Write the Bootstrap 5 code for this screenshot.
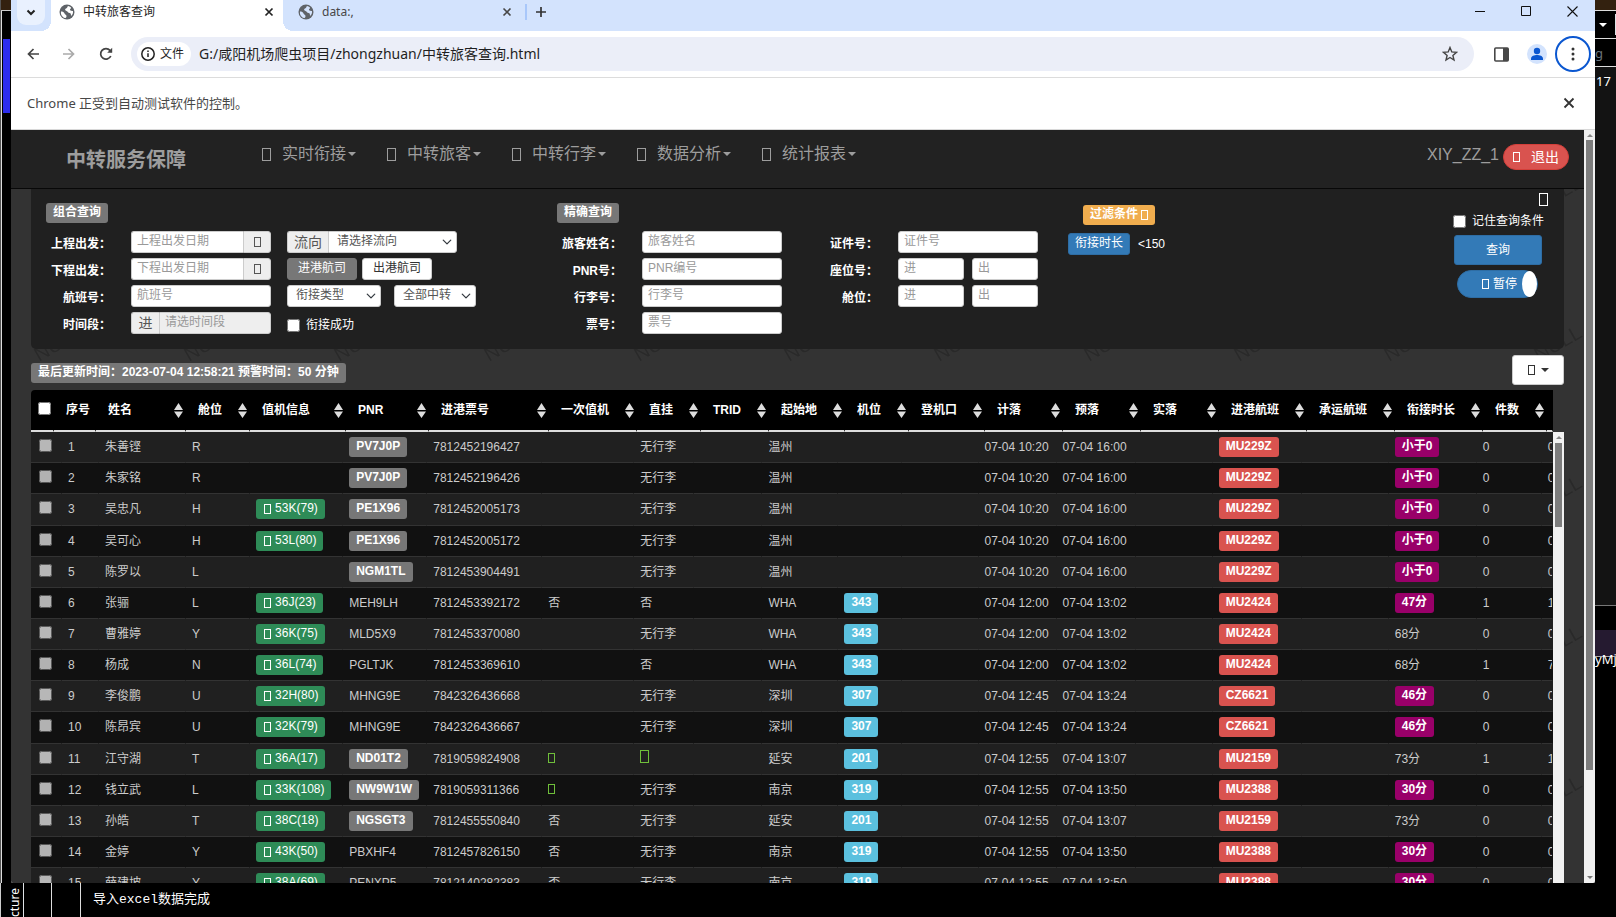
<!DOCTYPE html>
<html lang="zh-CN">
<head>
<meta charset="utf-8">
<meta name="viewport" content="width=device-width, initial-scale=1">
<title>中转旅客查询</title>
<link href="https://cdn.jsdelivr.net/npm/bootstrap@5.3.0/dist/css/bootstrap.min.css" rel="stylesheet">
<style>
:root{--ui:"Noto Sans","Noto Sans CJK SC",sans-serif;--page:"Liberation Sans","Noto Sans CJK SC",sans-serif}
body{height:100vh;background:#000;font-family:var(--page);font-size:12px;line-height:16px;color:#fff;overflow:hidden}
button,input,select{font-family:inherit}
.min-h-0{min-height:0}
/* desktop behind the browser */
.side-l{width:11px;border-left:1px solid #555;box-shadow:inset 1px 0 #ddd;background:#000}
.side-l .brown{height:11px;background:#33210f;border-bottom:1px solid #ccc}
.side-l .blue{height:74px;margin:28px 1px 0 2px;background:#2d2dee}
.side-r{width:21px;background:#000;font:13px/16px var(--ui)}
.side-r .brown{height:11px;background:#33210f;border-bottom:1px solid #ddd}
.side-r .cell{height:28px;border-bottom:1px solid #ddd}
.side-r .dark{height:539px;background:#131313;border-bottom:1px solid #777;padding:6px 0 0 1px}
.side-r .purple{height:27px;margin-top:24px;background:#251a30;border-bottom:1px solid #aaa}
.side-r .under{margin-top:-6px}
.console{height:34px;font-family:"Liberation Mono","Noto Sans CJK SC",monospace;font-size:13px}
.console .gut{width:29px;border-right:1px solid #ddd}
.console .first{width:23px;padding-right:6px;border-right:1px solid #ccc;writing-mode:vertical-rl;transform:rotate(180deg);font:12px/16px var(--ui)}
/* browser chrome */
.browser{background:#fff;color:#1f1f1f;font-family:var(--ui);border-radius:0 0 2px 2px}
.browser svg{display:block;flex:none}
.tabstrip{height:31px;background:#d3e3fd}
.tabstrip button,.tool,.infobar button{background:none;border:0;padding:0}
.tabstrip .tab-search{width:28px;height:25px;background:#e9f1fe;border-radius:0 0 9px 9px;margin-left:6px}
.tab-item{height:31px;padding-bottom:8px}
.tab-item.on{width:232px;margin-left:6px;background:#fff;position:relative;padding-left:8px;padding-right:5px}
.tab-item.on::before,.tab-item.on::after{content:"";position:absolute;bottom:0;width:10px;height:10px}
.tab-item.on::before{left:-10px;background:radial-gradient(circle at 0 0,transparent 10px,#fff 10px)}
.tab-item.on::after{right:-10px;background:radial-gradient(circle at 100% 0,transparent 10px,#fff 10px)}
.tab-item.off{width:238px;color:#474747;padding-left:15px;padding-right:5px}
.sep{width:2px;height:16px;background:#a8c7fa}
.win-ctl{width:46px;height:22px}
.toolbar{height:46px}
.omnibox{height:34px;background:#ebeef8;border-radius:17px;padding:0 16px 0 6px;margin:0 20px 0 18px}
.chip{height:24px;background:#fff;border-radius:12px;padding:0 7px 0 3px}
.omnibox input{border:0;background:none;outline:0;font-size:14px;color:#1f1f1f;height:24px;padding:0 0 2px}
.avatar{width:20px;height:20px;border-radius:50%;background:#d3e3fd;margin:0 8px 0 18px}
.menu-ring{width:36px;height:36px;border:2px solid #0b57d0!important;border-radius:50%}
.infobar{height:53px;border-top:1px solid #dcdcdc;border-bottom:1px solid #d8d8d8;font-size:13px;color:#474747;padding:0 20px 2px 16px}
/* scroll bars */
.vbar{width:11px;background:#f1f1f1;position:relative;flex:none}
.vbar i{display:block;width:7px;margin:10px auto 0;background:#7d7d7d}
.vbar::before,.vbar::after{content:"";position:absolute;left:3px;border:3px solid transparent}
.vbar::before{top:1px;border-bottom-color:#888}
.vbar.whole::after{bottom:1px;border-top-color:#777}
.vbar.whole i{height:630px}
.vbar.inner i{height:84px;margin-top:11px}
/* page */
.app{background:#333;font-family:var(--page);color:#fff}
.topnav{height:59px;background:#222;border-bottom:1px solid #080808;padding:0 15px 0 55px;color:#9d9d9d}
.topnav .title{font-size:20px;line-height:20px;font-weight:700;color:#9d9d9d;width:196px;margin-top:20px;text-decoration:none}
.topnav .menu-link{width:125px;color:#9d9d9d;font-size:16px;line-height:18px;text-decoration:none;margin-top:15px}
.menu-link .tofu{margin-right:11px}
.caret{display:inline-block;border:4px solid transparent;border-top-color:currentColor;border-bottom:0;margin-left:2px}
.tofu{display:inline-block;flex:none;width:7px;height:10px;border:1px solid currentColor}
.tofu.big{width:9px;height:13px}
.account{margin-top:14px;font-size:16px}
.exit{height:26px;width:66px;border-radius:13px;background:#d9534f;border:1px solid #d43f3a;color:#fff;font-size:14px;line-height:16px;padding:0}
.exit .tofu{margin-right:11px}
.watermark{position:absolute;inset:0;width:100%;height:100%}
.content{margin:0 20px}
.query{background:#202020;border-radius:0 0 5px 5px;height:160px}
.query .part{padding:14px 0 0 15px}
.query .side-part{padding:0 16px 0 15px}
.tag{display:inline-block;height:20px;line-height:18px;border-radius:3px;padding:0 7px;font-weight:700;color:#fff;background:#777;white-space:nowrap}
.tag.orange{background:#f0ad4e}.tag.red{background:#d9534f}.tag.cyan{background:#5bc0de}.tag.plum{background:#990069}
.tag.green{background:#2e8b57;font-weight:400;padding-left:8px}
.tag .tofu{margin-right:4px;vertical-align:-2px}
.tag.orange .tofu{margin-right:0}
.filter{margin-left:15px}
.fields{display:grid;grid-auto-rows:22px;row-gap:5px;margin-top:8px}
.fields.a{grid-template-columns:85px 140px 1fr}
.fields.b{grid-template-columns:85px 140px 116px 140px}
.fields .name{font-weight:700;text-align:right;padding-right:20px;line-height:26px;white-space:nowrap}
.box,.drop{height:22px;width:100%;min-width:0;border:1px solid #ccc;border-radius:3px;background-color:#fff;font-size:12px;line-height:16px;padding:0 5px 2px;color:#555;outline:0}
.box::placeholder{color:#999;opacity:1}
.box.off{background:#eee}
.addon{height:22px;flex:none;background:#eee;border:1px solid #ccc;color:#555;font-size:14px}
.addon.narrow{width:28px}
.addon.wide{width:41px}
.joinr{border-radius:3px 0 0 3px;border-right:0}.joinl{border-radius:0 3px 3px 0}
.drop{background-position:right 3px center;background-size:12px 10px;padding:0 18px 2px 8px}
.drop.flow{width:129px}.drop.kind{width:94px;margin-right:13px}.drop.all{width:82px}
.small-btn{height:22px;border:1px solid #ccc;border-radius:3px;font-size:12px;line-height:16px;padding:0 0 2px;width:70px;background:#fff;color:#333}
.small-btn.gray{background:#777;border-color:#777;color:#fff;margin-right:5px}
.small-btn.blue{background:#337ab7;border-color:#2e6da4;color:#fff;width:62px}
.tick{width:13px;height:13px;margin:0;flex:none}
.tick+label{margin-left:6px}
.keep{margin:7px 4px 6px 0}
.go{width:88px;height:30px;background:#337ab7;border:1px solid #2e6da4;border-radius:3px;color:#fff;font-size:12px;margin:0 6px 5px 0}
.pause{width:81px;height:28px;background:#337ab7;border:1px solid #2e6da4;border-radius:14px;color:#fff;font-size:12px;padding:0;margin-right:10px}
.knob{width:15px;height:26px;background:#fff;border-radius:50%;margin-left:5px}
.status{padding-top:6px;margin-bottom:5px}
.status .tag{margin-bottom:2px}
.export{width:52px;height:30px;border:1px solid #ccc;border-radius:3px;background:#fff;color:#333}
.heads,.rows{table-layout:fixed;width:100%;border-collapse:separate;border-spacing:0;white-space:nowrap}
.head-wrap{background:#000;border-radius:4px 0 0 0;margin-right:11px}
.heads th{height:42px;border-bottom:2px solid #ddd;border-right:1px solid #000;padding:0 2px 0 12px}
.heads th:first-child{padding:0 0 4px 7px}
.heads th .tick{display:block}
.rows td{height:31px;padding:0 0 1px 6px;color:#ccc;border-bottom:1px solid #333;border-right:1px solid #202020;background:#202020;overflow:hidden}
.rows tr:nth-child(even) td{background:#111;border-right-color:#111}
.rows tr:nth-child(7n+3) td{height:32px}
.rows .tick{opacity:.68;display:block}
.rows td:first-child{padding:0 0 4px 8px}
.green-mark{color:#6fbf3a}
</style>
</head>
<body class="d-flex flex-column">
<div class="d-flex flex-grow-1 min-h-0">
  <div class="side-l flex-shrink-0"><div class="brown"></div><div class="blue"></div></div>

  <div class="browser d-flex flex-column flex-grow-1 min-h-0 overflow-hidden">
    <header>
      <div class="tabstrip d-flex">
        <button class="tab-search d-flex justify-content-center align-items-center" aria-label="搜索标签页"><svg width="10" height="8" viewBox="0 0 10 8"><path d="M1.5 1.5 5 5l3.5-3.5" fill="none" stroke="#222" stroke-width="2"/></svg></button>
        <div class="tab-item on d-flex align-items-center">
          <svg width="16" height="16" viewBox="0 0 16 16"><circle cx="8" cy="8" r="7.5" fill="#5f6368"/><path d="M2 7.500C3.500 7.500 5 8 5.500 9.500s2 1 2 2.500-.7 2-1.500 2C3.500 13.300 1.500 11 2 7.500zM9 2c-1 1-.5 2-2 2.500S6 6.500 7.500 7 9 9 10.500 9 12 10.500 12 12c1.500-1 2.300-3 2-5-1-.3-2.500.2-3-1s1.500-1.200 1-2.500C11 2.500 10 2 9 2z" fill="#fff"/></svg>
          <span class="ms-2 flex-grow-1">中转旅客查询</span>
          <button class="me-1" aria-label="关闭"><svg width="10" height="10" viewBox="0 0 10 10"><path d="M1.500 1.500l7 7M8.500 1.500l-7 7" stroke="#222" stroke-width="1.700"/></svg></button>
        </div>
        <div class="tab-item off d-flex align-items-center">
          <svg width="16" height="16" viewBox="0 0 16 16"><circle cx="8" cy="8" r="7.500" fill="#5f6368"/><path d="M2 7.500C3.500 7.500 5 8 5.500 9.500s2 1 2 2.500-.7 2-1.500 2C3.500 13.300 1.500 11 2 7.500zM9 2c-1 1-.5 2-2 2.500S6 6.500 7.500 7 9 9 10.500 9 12 10.500 12 12c1.500-1 2.300-3 2-5-1-.3-2.500.2-3-1s1.500-1.200 1-2.500C11 2.500 10 2 9 2z" fill="#d3e3fd"/></svg>
          <span class="ms-2 flex-grow-1">data:,</span>
          <button class="me-1" aria-label="关闭"><svg width="10" height="10" viewBox="0 0 10 10"><path d="M1.500 1.500l7 7M8.500 1.500l-7 7" stroke="#474747" stroke-width="1.600"/></svg></button>
        </div>
        <div class="d-flex align-items-center pb-2"><span class="sep ms-1"></span>
          <button class="ms-2 ps-0" aria-label="新标签页"><svg width="12" height="12" viewBox="0 0 12 12"><path d="M6 1v10M1 6h10" stroke="#333" stroke-width="1.700"/></svg></button></div>
        <div class="d-flex ms-auto">
          <button class="win-ctl d-flex justify-content-center align-items-center" aria-label="最小化"><svg width="10" height="10" viewBox="0 0 10 10"><path d="M0 5.500h10" stroke="#111"/></svg></button>
          <button class="win-ctl d-flex justify-content-center align-items-center" aria-label="最大化"><svg width="10" height="10" viewBox="0 0 10 10"><path d="M.5.500h9v9h-9z" fill="none" stroke="#111"/></svg></button>
          <button class="win-ctl d-flex justify-content-center align-items-center" aria-label="关闭窗口"><svg width="11" height="11" viewBox="0 0 11 11"><path d="M.5.500l10 10M10.500.500l-10 10" stroke="#111" stroke-width="1.100"/></svg></button>
        </div>
      </div>
      <div class="toolbar d-flex align-items-center ps-3 pe-1">
        <button class="tool" aria-label="后退"><svg width="12" height="12" viewBox="0 0 12 12"><path d="M12 6H1.500M6.500 1l-5 5 5 5" fill="none" stroke="#444" stroke-width="1.700"/></svg></button>
        <button class="tool ms-4" aria-label="前进"><svg width="12" height="12" viewBox="0 0 12 12"><path d="M0 6h10.500M5.500 1l5 5-5 5" fill="none" stroke="#aaa" stroke-width="1.700"/></svg></button>
        <button class="tool ms-4" aria-label="重新加载"><svg width="14" height="14" viewBox="0 0 14 14"><path d="M11.800 9A5.300 5.300 0 1 1 11 3.400L12.600 5" fill="none" stroke="#444" stroke-width="1.700"/><path d="M13.200.8v5H8.200z" fill="#444"/></svg></button>
        <div class="omnibox d-flex align-items-center flex-grow-1">
          <span class="chip d-flex align-items-center me-2"><svg width="16" height="16" viewBox="0 0 16 16"><circle cx="8" cy="8" r="6.200" fill="none" stroke="#222" stroke-width="1.500"/><path d="M8 7.200v3.800M8 4.600v1.500" stroke="#222" stroke-width="1.500"/></svg><span class="ms-1">文件</span></span>
          <input class="flex-grow-1" aria-label="地址" value="G:/咸阳机场爬虫项目/zhongzhuan/中转旅客查询.html">
          <svg width="16" height="16" viewBox="0 0 16 16"><path d="M8 1.500l1.800 4.400 4.700.4-3.600 3.100 1.100 4.600L8 11.500 4 14l1.100-4.600L1.500 6.300l4.700-.4z" fill="none" stroke="#444" stroke-width="1.400"/></svg>
        </div>
        <button class="tool" aria-label="侧边栏"><svg width="15" height="15" viewBox="0 0 15 15"><rect x=".8" y="1" width="13.400" height="13" rx="1" fill="none" stroke="#474747" stroke-width="1.600"/><path d="M9 1h5v13H9z" fill="#474747"/></svg></button>
        <button class="tool avatar" aria-label="个人资料"><svg width="20" height="20" viewBox="0 0 20 20"><circle cx="10" cy="7" r="3.200" fill="#0b57d0"/><path d="M4 16v-1.500C4 12 7.500 11 10 11s6 1 6 3.500V16z" fill="#0b57d0"/></svg></button>
        <button class="tool menu-ring d-flex justify-content-center align-items-center" aria-label="菜单"><svg width="4" height="16" viewBox="0 0 4 16"><circle cx="2" cy="3" r="1.500" fill="#333"/><circle cx="2" cy="8" r="1.500" fill="#333"/><circle cx="2" cy="13" r="1.500" fill="#333"/></svg></button>
      </div>
      <div class="infobar d-flex align-items-center justify-content-between"><span>Chrome 正受到自动测试软件的控制。</span>
        <button aria-label="关闭提示"><svg width="12" height="12" viewBox="0 0 12 12"><path d="M1.500 1.500l9 9M10.500 1.500l-9 9" stroke="#333" stroke-width="1.800"/></svg></button></div>
    </header>

    <div class="app d-flex flex-grow-1 min-h-0">
      <div class="flex-grow-1 d-flex flex-column min-h-0 overflow-hidden">
        <nav class="topnav d-flex align-items-start flex-shrink-0">
          <a class="title" href="#">中转服务保障</a>
          <a class="menu-link d-flex align-items-center" href="#"><span class="tofu big"></span>实时衔接<span class="caret"></span></a>
          <a class="menu-link d-flex align-items-center" href="#"><span class="tofu big"></span>中转旅客<span class="caret"></span></a>
          <a class="menu-link d-flex align-items-center" href="#"><span class="tofu big"></span>中转行李<span class="caret"></span></a>
          <a class="menu-link d-flex align-items-center" href="#"><span class="tofu big"></span>数据分析<span class="caret"></span></a>
          <a class="menu-link d-flex align-items-center" href="#"><span class="tofu big"></span>统计报表<span class="caret"></span></a>
          <div class="account d-flex align-items-center ms-auto"><span class="me-1 pb-1">XIY_ZZ_1</span><button class="exit d-flex align-items-center justify-content-center"><span class="tofu"></span>退出</button></div>
        </nav>

        <main class="flex-grow-1 d-flex flex-column min-h-0 position-relative">
          <svg class="watermark" aria-hidden="true"><defs><pattern id="wm" y="100" width="150" height="150" patternUnits="userSpaceOnUse"><text x="28" y="73" transform="rotate(-30 28 73)" font-size="20" fill="#292929" font-family="Liberation Sans">NULL</text></pattern></defs><rect width="100%" height="100%" fill="url(#wm)"/></svg>
          <div class="content position-relative d-flex flex-column flex-grow-1 min-h-0">
          <form class="query d-flex flex-shrink-0" onsubmit="return false">
            <section class="part col-4">
              <span class="tag">组合查询</span>
              <div class="fields a">
                <label class="name" for="d1">上程出发：</label>
                <div class="d-flex"><input class="box joinr" id="d1" placeholder="上程出发日期"><span class="addon narrow joinl d-flex align-items-center justify-content-center"><span class="tofu"></span></span></div>
                <div class="d-flex ps-3"><label class="addon wide joinr d-flex align-items-center justify-content-center" for="flow">流向</label><select class="form-select drop flow joinl" id="flow"><option>请选择流向</option></select></div>
                <label class="name" for="d2">下程出发：</label>
                <div class="d-flex"><input class="box joinr" id="d2" placeholder="下程出发日期"><span class="addon narrow joinl d-flex align-items-center justify-content-center"><span class="tofu"></span></span></div>
                <div class="d-flex ps-3"><button class="small-btn gray">进港航司</button><button class="small-btn">出港航司</button></div>
                <label class="name" for="fl">航班号：</label>
                <input class="box" id="fl" placeholder="航班号">
                <div class="d-flex ps-3"><select class="form-select drop kind" aria-label="衔接类型"><option>衔接类型</option></select><select class="form-select drop all" aria-label="全部中转"><option>全部中转</option></select></div>
                <label class="name" for="tm">时间段：</label>
                <div class="d-flex"><span class="addon narrow joinr d-flex align-items-center justify-content-center">进</span><input class="box off joinl" id="tm" placeholder="请选时间段"></div>
                <div class="d-flex ps-3 align-items-center pt-1"><input type="checkbox" class="tick" id="ok"><label for="ok">衔接成功</label></div>
              </div>
            </section>
            <section class="part col-4">
              <span class="tag">精确查询</span>
              <div class="fields b">
                <label class="name" for="p1">旅客姓名：</label><input class="box" id="p1" placeholder="旅客姓名">
                <label class="name" for="p2">证件号：</label><input class="box" id="p2" placeholder="证件号">
                <label class="name" for="p3">PNR号：</label><input class="box" id="p3" placeholder="PNR编号">
                <label class="name" for="p4">座位号：</label><div class="d-flex gap-2"><input class="box" id="p4" placeholder="进"><input class="box" aria-label="座位号出" placeholder="出"></div>
                <label class="name" for="p5">行李号：</label><input class="box" id="p5" placeholder="行李号">
                <label class="name" for="p6">舱位：</label><div class="d-flex gap-2"><input class="box" id="p6" placeholder="进"><input class="box" aria-label="舱位出" placeholder="出"></div>
                <label class="name" for="p7">票号：</label><input class="box" id="p7" placeholder="票号">
              </div>
            </section>
            <section class="side-part col-4 d-flex justify-content-between">
              <div class="pt-3"><span class="tag orange filter">过滤条件 <span class="tofu"></span></span>
                <div class="d-flex align-items-center pt-1 mt-1"><button class="small-btn blue">衔接时长</button><span class="ms-2">&lt;150</span></div></div>
              <div class="d-flex flex-column align-items-end pt-1">
                <span class="tofu big"></span>
                <div class="keep d-flex align-items-center"><input type="checkbox" class="tick" id="keep"><label for="keep">记住查询条件</label></div>
                <button class="go">查询</button>
                <button class="pause d-flex align-items-center justify-content-end"><span class="tofu me-1"></span>暂停<span class="knob"></span></button>
              </div>
            </section>
          </form>

          <div class="status d-flex justify-content-between align-items-end">
            <span class="tag">最后更新时间：2023-07-04 12:58:21 预警时间：50 分钟</span>
            <button class="export d-flex align-items-center justify-content-center" aria-label="导出"><span class="tofu me-1"></span><span class="caret"></span></button>
          </div>

          <div class="head-wrap"><table class="heads"><colgroup id="hc"></colgroup><thead><tr id="hr"></tr></thead></table></div>
          <div class="d-flex flex-grow-1 min-h-0">
            <div class="flex-grow-1 overflow-hidden"><table class="rows"><colgroup id="bc"></colgroup><tbody id="rows"></tbody></table></div>
            <div class="vbar inner"><i></i></div>
          </div>
          </div>
        </main>
      </div>
      <div class="vbar whole"><i></i></div>
    </div>
  </div>

  <div class="side-r flex-shrink-0 overflow-hidden"><div class="brown"></div>
    <div class="cell d-flex align-items-center justify-content-between ps-1"><span class="caret m-0"></span><span class="border-start h-75"></span></div>
    <div class="cell text-secondary d-flex align-items-center">g</div>
    <div class="dark">17</div><div class="purple"></div><div class="under">yMj</div></div>
</div>
<footer class="console d-flex flex-shrink-0">
  <div class="first">cture</div><div class="gut border-start"></div><div class="gut"></div><div class="ps-2 ms-1 d-flex align-items-center">导入excel数据完成</div>
</footer>

<script src="https://cdn.jsdelivr.net/npm/bootstrap@5.3.0/dist/js/bootstrap.bundle.min.js"></script>
<script>
const headWidths=[23,42,90,64,96,83,120,88,64,68,76,64,76,78,78,78,88,88,88,64,6];
const bodyWidths=[31,37,87,64,93,84,115,92,60,68,76,64,76,78,79,77,89,87,88,65,11];
const cols=w=>w.map(n=>`<col style="width:${n}px">`).join('');
hc.innerHTML=cols(headWidths);bc.innerHTML=cols(bodyWidths);
const sorter='<svg width="9" height="15" viewBox="0 0 9 15"><path d="M4.500 0 9 7H0zM0 8.500h9L4.500 15z" fill="#ddd"/></svg>';
const names=['姓名','舱位','值机信息','PNR','进港票号','一次值机','直挂','TRID','起始地','机位','登机口','计落','预落','实落','进港航班','承运航班','衔接时长','件数'];
hr.innerHTML='<th><input type="checkbox" class="tick" aria-label="全选"></th><th>序号</th>'+names.map(n=>`<th><div class="d-flex align-items-center justify-content-between">${n}${sorter}</div></th>`).join('')+'<th class="p-0"></th>';
// name, class, seat, PNR (* = highlighted), ticket, first check-in, through baggage, origin, stand, planned, expected, flight, minutes (* = alert), pieces, weight
const data=`朱善铿|R||PV7J0P*|7812452196427||无行李|温州||10:20|16:00|MU229Z|小于0*|0|0
朱家铭|R||PV7J0P*|7812452196426||无行李|温州||10:20|16:00|MU229Z|小于0*|0|0
吴忠凡|H|53K(79)|PE1X96*|7812452005173||无行李|温州||10:20|16:00|MU229Z|小于0*|0|0
吴可心|H|53L(80)|PE1X96*|7812452005172||无行李|温州||10:20|16:00|MU229Z|小于0*|0|0
陈罗以|L||NGM1TL*|7812453904491||无行李|温州||10:20|16:00|MU229Z|小于0*|0|0
张骊|L|36J(23)|MEH9LH|7812453392172|否|否|WHA|343|12:00|13:02|MU2424|47分*|1|1
曹雅婷|Y|36K(75)|MLD5X9|7812453370080||无行李|WHA|343|12:00|13:02|MU2424|68分|0|0
杨成|N|36L(74)|PGLTJK|7812453369610||否|WHA|343|12:00|13:02|MU2424|68分|1|7
李俊鹏|U|32H(80)|MHNG9E|7842326436668||无行李|深圳|307|12:45|13:24|CZ6621|46分*|0|0
陈昂宾|U|32K(79)|MHNG9E|7842326436667||无行李|深圳|307|12:45|13:24|CZ6621|46分*|0|0
江守湖|T|36A(17)|ND01T2*|7819059824908|#|##|延安|201|12:55|13:07|MU2159|73分|1|1
钱立武|L|33K(108)|NW9W1W*|7819059311366|#|无行李|南京|319|12:55|13:50|MU2388|30分*|0|0
孙皓|T|38C(18)|NGSGT3*|7812455550840|否|无行李|延安|201|12:55|13:07|MU2159|73分|0|0
金婷|Y|43K(50)|PBXHF4|7812457826150|否|无行李|南京|319|12:55|13:50|MU2388|30分*|0|0
薛建坡|Y|38A(69)|PENXP5|7812140282383|否|无行李|南京|319|12:55|13:50|MU2388|30分*|0|0`.split('\n');
const tag=(t,c)=>t?`<span class="tag ${c}">${t}</span>`:'';
const mark=t=>t==='#'?'<span class="tofu green-mark"></span>':t==='##'?'<span class="tofu big green-mark"></span>':t;
const star=(t,c)=>t.endsWith('*')?tag(t.slice(0,-1),c):t;
rows.innerHTML=data.map((l,i)=>{const d=l.split('|');
 return '<tr>'+[`<input type="checkbox" class="tick" aria-label="选择 ${d[0]}">`,i+1,d[0],d[1],d[2]?tag('<span class="tofu"></span>'+d[2],'green'):'',star(d[3],''),d[4],mark(d[5]),mark(d[6]),'',d[7],tag(d[8],'cyan'),'','07-04 '+d[9],'07-04 '+d[10],'',tag(d[11],'red'),'',star(d[12],'plum'),d[13],d[14]].map(c=>`<td>${c}</td>`).join('')+'</tr>'}).join('');
</script>
</body>
</html>
